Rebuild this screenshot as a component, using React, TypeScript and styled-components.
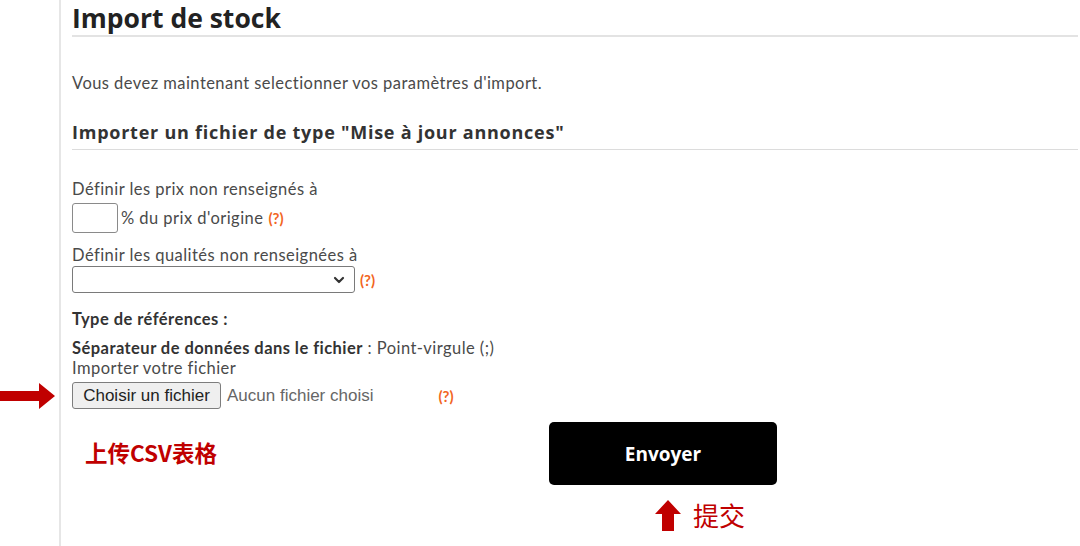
import styled, { createGlobalStyle } from 'styled-components'
import { ChevronDown } from 'lucide-react'

const GlobalStyle = createGlobalStyle`
  html, body {
    margin: 0;
    padding: 0;
    background: #ffffff;
  }
  * {
    box-sizing: border-box;
  }
`

const Help = () => <HelpMark>(?)</HelpMark>

const App = () => {
  return (
    <>
      <GlobalStyle />
      <Page>
        <Sidebar />
        <Content>
          <Title>Import de stock</Title>
          <Intro>Vous devez maintenant selectionner vos paramètres d'import.</Intro>
          <SubTitle>Importer un fichier de type "Mise à jour annonces"</SubTitle>

          <Form>
            <Label $top={29}>Définir les prix non renseignés à</Label>
            <FieldRow $top={4}>
              <PercentInput type="text" />
              <Text>% du prix d'origine</Text>
              <Help />
            </FieldRow>

            <Label $top={12}>Définir les qualités non renseignées à</Label>
            <FieldRow $top={1}>
              <SelectBox>
                <Select defaultValue="">
                  <option value=""></option>
                </Select>
                <ChevronDown size={16} strokeWidth={3.2} color="#333" />
              </SelectBox>
              <Help />
            </FieldRow>

            <Label $top={16}>
              <strong>Type de références :</strong>
            </Label>
            <Label $top={9}>
              <strong>Séparateur de données dans le fichier</strong> : Point-virgule (;)
            </Label>
            <Label $top={0}>Importer votre fichier</Label>

            <FileRow>
              <LeftArrow width="56" height="26" viewBox="0 0 56 26">
                <path d="M0 8 H40 V0 L56 13 L40 26 V18 H0 Z" fill="#c00000" />
              </LeftArrow>
              <FileButton type="button">Choisir un fichier</FileButton>
              <FileName>Aucun fichier choisi</FileName>
              <FileHelp>
                <Help />
              </FileHelp>
            </FileRow>
          </Form>

          <SubmitArea>
            <UploadNote>上传CSV表格</UploadNote>
            <SubmitColumn>
              <SubmitButton type="button">Envoyer</SubmitButton>
              <SubmitNote>
                <svg width="26" height="31" viewBox="0 0 26 31">
                  <path d="M13 0 L26 14 H19 V31 H7 V14 H0 Z" fill="#c00000" />
                </svg>
                <span>提交</span>
              </SubmitNote>
            </SubmitColumn>
          </SubmitArea>
        </Content>
      </Page>
    </>
  )
}

export default App

const Page = styled.div`
  display: flex;
  width: 1080px;
  height: 546px;
  overflow: hidden;
  font-family: 'Lato', 'Open Sans', sans-serif;
  color: #4a4a4a;
`
const Sidebar = styled.div`
  width: 61px;
  flex-shrink: 0;
  border-right: 2px solid #e6e6e6;
`
const Content = styled.div`
  flex: 1;
  padding: 0 2px 0 11px;
  display: flex;
  flex-direction: column;
`
const Title = styled.h1`
  margin: 0;
  height: 35px;
  line-height: 36px;
  font-family: 'Open Sans', sans-serif;
  font-size: 26.5px;
  font-weight: 700;
  color: #222;
  border-bottom: 2px solid #e3e3e3;
  box-sizing: content-box;
`
const Intro = styled.p`
  margin: 36px 0 0;
  font-size: 16.5px;
  letter-spacing: 0.45px;
  line-height: 20px;
`
const SubTitle = styled.h2`
  margin: 27px 0 0;
  padding-bottom: 5px;
  font-family: 'Open Sans', sans-serif;
  font-size: 18px;
  letter-spacing: 0.75px;
  line-height: 24px;
  font-weight: 700;
  color: #333;
  border-bottom: 1px solid #dcdcdc;
`
const Form = styled.div`
  display: flex;
  flex-direction: column;
  align-items: flex-start;
`
const Label = styled.div<{ $top: number }>`
  margin-top: ${(p) => p.$top}px;
  font-size: 16.5px;
  letter-spacing: 0.45px;
  line-height: 20px;
  strong {
    color: #333;
    font-weight: 700;
  }
`
const FieldRow = styled.div<{ $top: number }>`
  margin-top: ${(p) => p.$top}px;
  display: flex;
  align-items: center;
  gap: 3px;
`
const Text = styled.span`
  font-size: 16.5px;
  letter-spacing: 0.45px;
  line-height: 20px;
`
const HelpMark = styled.span`
  margin-left: 2px;
  font-size: 15px;
  font-weight: 700;
  color: #f26522;
`
const PercentInput = styled.input`
  width: 46px;
  height: 30px;
  border: 1px solid #8a8a8a;
  border-radius: 3px;
  padding: 0 4px;
  background: #fff;
`
const SelectBox = styled.div`
  position: relative;
  width: 283px;
  height: 27px;
  border: 1px solid #7a7a7a;
  border-radius: 3px;
  display: flex;
  align-items: center;
  padding-right: 7px;
  svg {
    pointer-events: none;
  }
`
const Select = styled.select`
  flex: 1;
  height: 100%;
  border: none;
  background: transparent;
  appearance: none;
  outline: none;
`
const FileRow = styled.div`
  position: relative;
  margin-top: 4px;
  display: flex;
  align-items: center;
`
const LeftArrow = styled.svg`
  position: absolute;
  left: -73px;
  top: 1px;
`
const FileButton = styled.button`
  height: 27px;
  width: 149px;
  padding: 0;
  font-family: 'Liberation Sans', Arial, sans-serif;
  font-size: 17px;
  color: #222;
  background: #efefef;
  border: 1px solid #7d7d7d;
  border-radius: 3px;
`
const FileName = styled.span`
  margin-left: 6px;
  font-family: 'Liberation Sans', Arial, sans-serif;
  font-size: 17px;
  color: #666;
`
const FileHelp = styled.span`
  margin-left: 63px;
`
const SubmitArea = styled.div`
  margin-top: 13px;
  display: flex;
  align-items: flex-start;
`
const UploadNote = styled.div`
  width: 477px;
  padding: 17px 0 0 13px;
  font-family: 'Noto Sans CJK SC', sans-serif;
  font-size: 22.5px;
  line-height: 26px;
  font-weight: 700;
  color: #c00000;
`
const SubmitColumn = styled.div`
  display: flex;
  flex-direction: column;
`
const SubmitButton = styled.button`
  width: 228px;
  height: 63px;
  background: #000;
  color: #fff;
  border: none;
  border-radius: 5px;
  font-family: 'Open Sans', sans-serif;
  font-size: 19px;
  font-weight: 700;
`
const SubmitNote = styled.div`
  margin: 14px 0 0 106px;
  display: flex;
  align-items: center;
  gap: 12px;
  span {
    font-family: 'Noto Sans CJK SC', sans-serif;
    font-size: 26px;
    line-height: 32px;
    color: #c00000;
  }
`
